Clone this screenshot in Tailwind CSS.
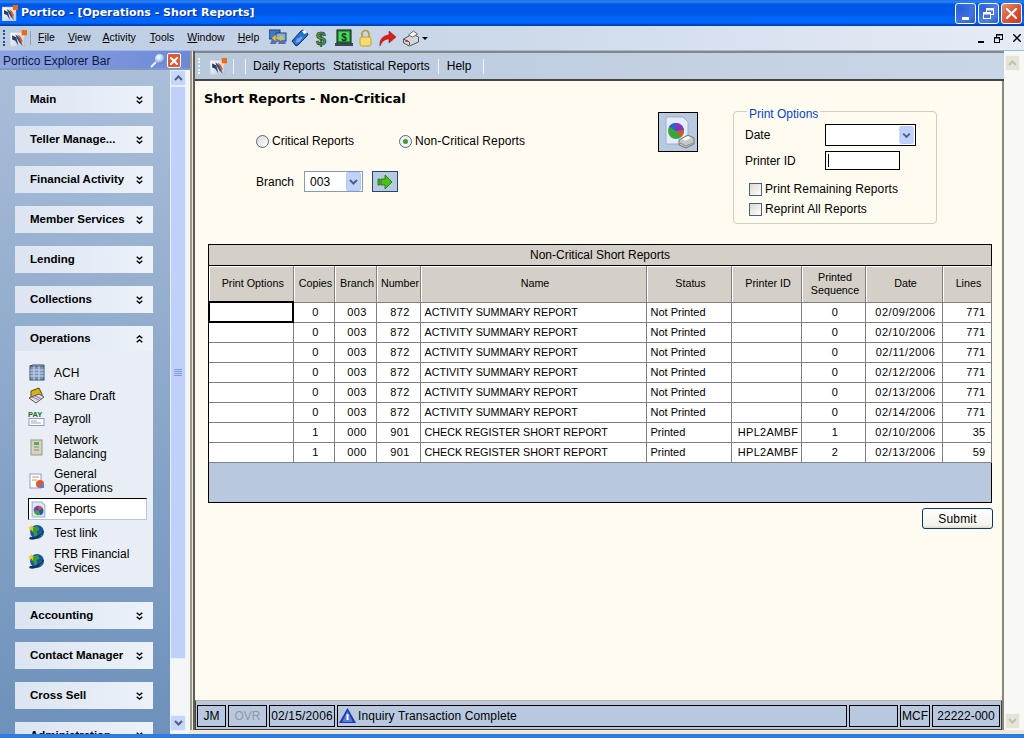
<!DOCTYPE html>
<html><head><meta charset="utf-8"><title>Portico</title>
<script src="https://cdn.jsdelivr.net/npm/@tailwindcss/browser@4"></script></head>
<body class="w-[1024px] h-[738px] overflow-hidden font-['Liberation_Sans',sans-serif] text-[12px] text-black bg-[#ece9d8]">
<svg class="absolute w-0 h-0" width="0" height="0">
<defs><radialGradient id="ball" cx=".35" cy=".3" r=".8"><stop offset="0" stop-color="#fff"/><stop offset=".5" stop-color="#b8cdf4"/><stop offset="1" stop-color="#3f62b4"/></radialGradient>
<linearGradient id="tile" x1="0" y1="0" x2="1" y2="1"><stop offset="0" stop-color="#fff"/><stop offset="1" stop-color="#bcc8dc"/></linearGradient></defs>
<symbol id="logo" viewBox="0 0 16 16"><rect x="0" y="2" width="14" height="14" fill="url(#tile)" stroke="#a9b4c6" stroke-width=".5"/><rect x="11" y="0" width="5" height="5" fill="#f06a10"/><path d="M2 5l4 2 2 8-3-5-3-1z" fill="#26406e"/><path d="M5 4l4 3 3 8-3-3-3-5z" fill="#31507f"/><path d="M7 4l2 4 2 5 1-3-2-4z" fill="#e8641a"/></symbol>
<symbol id="dbl" viewBox="0 0 7 8"><path d="M.7.7L3.500 3 6.300.7M.7 4.700L3.500 7 6.300 4.700" fill="none" stroke="#000" stroke-width="1.400"/></symbol>
<symbol id="dblup" viewBox="0 0 7 8"><path d="M.7 3.300L3.500 1 6.300 3.300M.7 7.300L3.500 5 6.300 7.300" fill="none" stroke="#000" stroke-width="1.400"/></symbol>
<symbol id="globe" viewBox="0 0 16 16"><circle cx="8.500" cy="7.500" r="6.500" fill="#1a50b0"/><path d="M5 3l4-1 2 3-3 2 1 3-3 2-1-4-2-1zM11 8l3-1-1 4-2 1z" fill="#35a030"/><path d="M1 14c4 2 9 0 14-7l-1-1c-3 5-8 7-12 6z" fill="#10306e"/><path d="M3 1l1 2h2l-1.500 1.500L5 7 3 5.500 1 7l.5-2.500L0 3h2z" fill="#f0c820"/></symbol>
<symbol id="pie" viewBox="0 0 16 16"><path d="M2 1h9l3 3v11H2z" fill="#dfe8f6" stroke="#9ab0d0"/><circle cx="8" cy="9" r="4.500" fill="#3aa63a"/><path d="M8 9V4.500a4.500 4.500 0 0 1 4 2.500z" fill="#e05030"/><path d="M8 9l4-2a4.500 4.500 0 0 1-2 6.500z" fill="#304fc0"/><path d="M8 9L3.500 9A4.500 4.500 0 0 1 8 4.500z" fill="#8a30c8"/></symbol>
<symbol id="combo" viewBox="0 0 15 19"><rect x=".5" y=".5" width="14" height="18" rx="1.500" fill="#c1d2fa" stroke="#b6c9f5"/><path d="M4 8l3.500 3.500L11 8" fill="none" stroke="#4d6185" stroke-width="2"/></symbol>
</svg>

<!-- title bar -->
<header class="h-[26px] flex items-center pl-[2px] pr-[2px] bg-[linear-gradient(#1f6fe8_0,#2b84f5_2px,#0058e8_4px,#0058e8_15px,#0066fb_17px,#0066fb_23px,#0040b0_25px)]">
<svg class="w-[16px] h-[16px]"><use href="#logo"/></svg>
<h1 class="ml-[3px] text-white font-bold text-[11px] font-['DejaVu_Sans',sans-serif] [text-shadow:1px_1px_0_#0a2f90]">Portico - [Operations - Short Reports]</h1>
<div class="ml-auto flex gap-[2px]">
<div class="w-[21px] h-[21px] rounded-[3px] border border-white bg-[radial-gradient(circle_at_25%_25%,#2a5fd8,#3f74e4_60%,#2b55c8)] flex items-end pl-[6px] pb-[3px]"><i class="block w-[7px] h-[3px] bg-white"></i></div>
<div class="w-[21px] h-[21px] rounded-[3px] border border-white bg-[radial-gradient(circle_at_25%_25%,#2a5fd8,#4f7fe4_60%,#2b55c8)] flex items-center justify-center"><svg width="11" height="11" fill="none" stroke="#fff"><rect x="3.500" y=".5" width="7" height="6" stroke-width="1"/><path d="M3.500 1.500h7" stroke-width="2"/><rect x=".5" y="4.500" width="7" height="6" fill="#4470dc"/><path d="M.5 5.500h7" stroke-width="2"/></svg></div>
<div class="w-[21px] h-[21px] rounded-[3px] border border-white bg-[linear-gradient(135deg,#e89070,#d8583a_50%,#c83818)] flex items-center justify-center"><svg width="11" height="11" stroke="#fff" stroke-width="2"><path d="M0 0l11 11M11 0L0 11"/></svg></div>
</div>
</header>

<!-- menu bar -->
<nav class="h-[25px] flex items-center bg-[linear-gradient(90deg,#bccce2,#c8d6e8_40%,#e6ecf6)] pl-[3px] pr-[3px] border-b border-[#9db8ec]">
<div class="w-[2px] h-[16px] border-l-2 border-dotted border-[#1f4f8f]"></div>
<svg class="w-[17px] h-[17px] ml-[5px]"><use href="#logo"/></svg>
<i class="block w-px h-[14px] bg-[#f4f8ff] ml-[3px] border-l border-[#8da5c6]"></i>
<ul class="flex w-[228px] shrink-0 ml-[7px] text-[10.500px]">
<li><u>F</u>ile</li><li class="ml-[13px]"><u>V</u>iew</li><li class="ml-[12px]"><u>A</u>ctivity</li><li class="ml-[14px]"><u>T</u>ools</li><li class="ml-[13px]"><u>W</u>indow</li><li class="ml-[13px]"><u>H</u>elp</li>
</ul>
<div class="flex items-center ml-[3px]">
<svg width="18" height="18" viewBox="0 0 18 18"><rect x="0" y="1" width="11" height="9" fill="#3f78c8" stroke="#1e3f78"/><rect x="7" y="4" width="10" height="8" fill="#7ab0e6" stroke="#1e3f78"/><path d="M3 10h6l-2 5H1zM10 12h6l1 3H9z" fill="#5a6fb0"/><path d="M4 9h10M7 6.500L4 9l3 2.500M11 6.500L14 9l-3 2.500" fill="none" stroke="#e8c020" stroke-width="1.600"/></svg>
<svg class="ml-[4px]" width="18" height="18" viewBox="0 0 18 18"><path d="M1 12L10 2l2-1 5 4-1 2-9 9-2 1z" fill="#1c74d0" stroke="#0f2f66"/><path d="M4 13l6-6 2 2-6 5z" fill="#4db0ea"/><circle cx="7.500" cy="11" r="2" fill="#b38ae8"/><path d="M11 2l3-1 2 3-3 1z" fill="#fff"/></svg>
<svg class="ml-[4px]" width="16" height="18" viewBox="0 0 16 18"><text x="8" y="15.500" text-anchor="middle" font-size="18" font-weight="700" fill="#46a24a" stroke="#25402a" stroke-width=".7" font-family="Liberation Sans">$</text></svg>
<svg class="ml-[6px]" width="18" height="18" viewBox="0 0 18 18"><rect x="2" y="1" width="14" height="13" fill="#21a33c" stroke="#111"/><rect x="4" y="3" width="10" height="9" fill="#52d060"/><text x="9" y="12" text-anchor="middle" font-size="10" font-weight="700" fill="#0b3a14" font-family="Liberation Sans">$</text><rect x="0" y="14" width="18" height="3" fill="#3f4650"/></svg>
<svg class="ml-[5px]" width="15" height="18" viewBox="0 0 15 18"><path d="M4 8V5a3.500 3.500 0 0 1 7 0v3" fill="none" stroke="#b89a38" stroke-width="1.700"/><rect x="2" y="8" width="11" height="9" rx="2" fill="#f4dc70" stroke="#c4a030"/></svg>
<svg class="ml-[6px]" width="18" height="18" viewBox="0 0 18 18"><path d="M1 17C0 10 5 6 10 6V2l7 6-7 6v-4c-4 0-7 2-9 7z" fill="#dd1c18" stroke="#8c1010" stroke-width=".5"/></svg>
<div class="flex items-center gap-[2px] ml-[5px]"><svg width="18" height="18" viewBox="0 0 17 18"><path d="M1 10l9-5 6 3v5l-9 4-6-3z" fill="#d4d6da" stroke="#555"/><path d="M6 6l5-4 4 3-5 3z" fill="#fff" stroke="#666"/><path d="M1 10l6 3v3" fill="none" stroke="#555"/><rect x="3" y="11" width="2" height="2" fill="#d02020"/></svg><i class="block border-x-[3px] border-t-[3px] border-x-transparent border-t-black"></i></div>
</div>
<div class="ml-auto flex items-center gap-[10px] text-black">
<i class="block w-[6px] h-[2px] bg-black mt-[8px]"></i>
<svg width="9" height="9" fill="none" stroke="#000"><rect x="2.500" y=".5" width="6" height="5"/><rect x=".5" y="3.500" width="5" height="5" fill="#e2e8f3"/><path d="M1 4h4M3 1h5"/></svg>
<svg width="8" height="8" stroke="#000" stroke-width="1.500"><path d="M0 0l8 8M8 0L0 8"/></svg>
</div>
</nav>

<div class="flex h-[683px]">
<!-- explorer -->
<aside class="w-[190px] shrink-0 flex flex-col overflow-hidden">
<div class="h-[19px] flex items-center pl-[3px] pr-[9px] bg-[linear-gradient(90deg,#8ca4e0,#6e88d8)] text-[12px] text-[#0b1a40] shadow-[inset_0_-2px_0_#7f9ac0]">
<span>Portico Explorer Bar</span>
<svg class="ml-auto" width="16" height="15" viewBox="0 0 16 15"><path d="M6 9l-5 5" stroke="#e8f0ff" stroke-width="2"/><circle cx="10" cy="6" r="5" fill="url(#ball)"/></svg>
<div class="w-[14px] h-[15px] ml-[1px] rounded-[2px] bg-[#df5a34] border border-white flex items-center justify-center"><svg width="8" height="8" stroke="#fff" stroke-width="2"><path d="M0 0l8 8M8 0L0 8"/></svg></div>
</div>
<div class="flex-1 flex min-h-0">
<div class="w-[170px] shrink-0 pl-[15px] pr-[17px] pt-[16px] bg-[linear-gradient(#aabed9,#6d91bb)] flex flex-col gap-[13px] overflow-hidden">
<div class="h-[27px] shrink-0 flex items-center justify-between pl-[15px] pr-[10px] font-bold text-[11.500px] bg-[linear-gradient(90deg,#dbe4f0,#edf2f9)]">Main<svg width="7" height="8"><use href="#dbl"/></svg></div>
<div class="h-[27px] shrink-0 flex items-center justify-between pl-[15px] pr-[10px] font-bold text-[11.500px] bg-[linear-gradient(90deg,#dbe4f0,#edf2f9)]">Teller Manage...<svg width="7" height="8"><use href="#dbl"/></svg></div>
<div class="h-[27px] shrink-0 flex items-center justify-between pl-[15px] pr-[10px] font-bold text-[11.500px] bg-[linear-gradient(90deg,#dbe4f0,#edf2f9)]">Financial Activity<svg width="7" height="8"><use href="#dbl"/></svg></div>
<div class="h-[27px] shrink-0 flex items-center justify-between pl-[15px] pr-[10px] font-bold text-[11.500px] bg-[linear-gradient(90deg,#dbe4f0,#edf2f9)]">Member Services<svg width="7" height="8"><use href="#dbl"/></svg></div>
<div class="h-[27px] shrink-0 flex items-center justify-between pl-[15px] pr-[10px] font-bold text-[11.500px] bg-[linear-gradient(90deg,#dbe4f0,#edf2f9)]">Lending<svg width="7" height="8"><use href="#dbl"/></svg></div>
<div class="h-[27px] shrink-0 flex items-center justify-between pl-[15px] pr-[10px] font-bold text-[11.500px] bg-[linear-gradient(90deg,#dbe4f0,#edf2f9)]">Collections<svg width="7" height="8"><use href="#dbl"/></svg></div>
<div class="shrink-0 mb-[2px]">
<div class="h-[25px] flex items-center justify-between pl-[15px] pr-[10px] font-bold text-[11.500px] bg-[linear-gradient(90deg,#dbe4f0,#edf2f9)]">Operations<svg width="7" height="8"><use href="#dblup"/></svg></div>
<ul class="h-[236px] bg-[#e8eef4] pt-[10px] pl-[13px] pr-[6px] text-[12px] leading-[14px]">
<li class="h-[23px] flex items-center gap-[9px]"><svg width="17" height="17" viewBox="0 0 17 17"><rect x="2" y="2" width="14" height="14" fill="#7a95bc" stroke="#3a4a66"/><path d="M2 2l3-1h11v1" fill="#a8b8cc" stroke="#3a4a66"/><path d="M2 6h14M2 9h14M2 12h14M6 2v14M11 2v14" stroke="#c9d8ec"/></svg><span>ACH</span></li>
<li class="h-[23px] flex items-center gap-[9px]"><svg width="17" height="17" viewBox="0 0 17 17"><path d="M3 10V4l8-3 3 6v2l-7 3z" fill="#d8b018" stroke="#5c4a14"/><path d="M1 11l10-4 5 3-8 6z" fill="#e4e2ee" stroke="#5c5440"/><path d="M4 11l6-2M6 12l6-2M8 13l5-2" stroke="#9a90c8"/></svg><span>Share Draft</span></li>
<li class="h-[23px] flex items-center gap-[9px]"><svg width="17" height="17" viewBox="0 0 17 17"><text x="0" y="7" font-size="7.500" font-weight="700" fill="#1a6a2a" font-family="Liberation Sans">PAY</text><rect x="1" y="8.500" width="15" height="7" fill="#fff" stroke="#9a8ee8"/><path d="M3 11h6M3 13h10" stroke="#9ab"/></svg><span>Payroll</span></li>
<li class="h-[34px] flex items-center gap-[9px]"><svg width="17" height="17" viewBox="0 0 17 17"><rect x="3" y="1" width="11" height="15" fill="#d6d2c2" stroke="#9a9888"/><rect x="6" y="3" width="5" height="3" fill="#4fb04f"/><path d="M6 8h5M6 11h5" stroke="#8a8a80"/></svg><span>Network<br>Balancing</span></li>
<li class="h-[34px] flex items-center gap-[9px]"><svg width="17" height="17" viewBox="0 0 17 17"><rect x="2" y="1" width="11" height="14" fill="#fff" stroke="#8aa0c8"/><path d="M4 4h7M4 7h5" stroke="#c0a060"/><circle cx="12" cy="11" r="4" fill="#e05a30"/><path d="M12 11h4v4h-4z" fill="#5a80d0"/></svg><span>General<br>Operations</span></li>
<li class="h-[22px] flex items-center gap-[7px] pl-[1px] bg-white border border-[#b5c4e0] border-t-black border-l-black"><svg width="17" height="17"><use href="#pie"/></svg><span>Reports</span></li>
<li class="h-[23px] mt-[1px] flex items-center gap-[9px]"><svg width="17" height="17"><use href="#globe"/></svg><span>Test link</span></li>
<li class="h-[34px] flex items-center gap-[9px]"><svg width="17" height="17"><use href="#globe"/></svg><span>FRB Financial<br>Services</span></li>
</ul></div>
<div class="h-[27px] shrink-0 flex items-center justify-between pl-[15px] pr-[10px] font-bold text-[11.500px] bg-[linear-gradient(90deg,#dbe4f0,#edf2f9)]">Accounting<svg width="7" height="8"><use href="#dbl"/></svg></div>
<div class="h-[27px] shrink-0 flex items-center justify-between pl-[15px] pr-[10px] font-bold text-[11.500px] bg-[linear-gradient(90deg,#dbe4f0,#edf2f9)]">Contact Manager<svg width="7" height="8"><use href="#dbl"/></svg></div>
<div class="h-[27px] shrink-0 flex items-center justify-between pl-[15px] pr-[10px] font-bold text-[11.500px] bg-[linear-gradient(90deg,#dbe4f0,#edf2f9)]">Cross Sell<svg width="7" height="8"><use href="#dbl"/></svg></div>
<div class="h-[27px] shrink-0 flex items-center justify-between pl-[15px] pr-[10px] font-bold text-[11.500px] bg-[linear-gradient(90deg,#dbe4f0,#edf2f9)]">Administration<svg width="7" height="8"><use href="#dbl"/></svg></div>
</div>
<div class="w-[16px] shrink-0 bg-[#f4f5f6] flex flex-col pb-[3px]">
<div class="h-[16px] bg-[#c6d5fa] border border-[#e8eefc] rounded-[2px] flex items-center justify-center"><svg width="9" height="6" fill="none" stroke="#4d6185" stroke-width="2"><path d="M1 5l3.500-3.500L8 5"/></svg></div>
<div class="h-[573px] bg-[#bfd0fb] border border-[#e8eefc] rounded-[2px] flex items-center justify-center"><svg width="8" height="8" stroke="#7f9bdc"><path d="M0 .5h8M0 2.500h8M0 4.500h8M0 6.500h8"/></svg></div>
<div class="h-[16px] mt-auto bg-[#c6d5fa] border border-[#e8eefc] rounded-[2px] flex items-center justify-center"><svg width="9" height="6" fill="none" stroke="#4d6185" stroke-width="2"><path d="M1 1l3.500 3.500L8 1"/></svg></div>
</div>
<div class="w-[4px] shrink-0 bg-[#f4f5f6]"></div>
</div>
</aside>
<!-- splitter -->
<div class="w-[5px] shrink-0 bg-[#ece9d8] border-l-2 border-r-2 border-l-[#9d9a8c] border-r-[#5e5c52] h-[679px]"></div>
<!-- main -->
<main class="w-[809px] shrink-0 h-[679px] flex flex-col border-t-2 border-[#8a8678]">
<div class="h-[28px] shrink-0 flex items-center bg-[linear-gradient(90deg,#b9c9dd,#c9d6e6)] border-b-2 border-[#444] pl-[3px]">
<div class="w-[2px] h-[16px] border-l-2 border-dotted border-[#f4f6f8]"></div>
<svg class="w-[17px] h-[17px] ml-[10px]"><use href="#logo"/></svg>
<i class="block w-px h-[15px] bg-[#eef3f8] ml-[6px]"></i><i class="block w-px h-[15px] bg-[#eef3f8] ml-[11px]"></i>
<span class="ml-[7px]">Daily Reports</span><span class="ml-[8px]">Statistical Reports</span>
<i class="block w-px h-[15px] bg-[#eef3f8] ml-[8px]"></i><span class="ml-[8px]">Help</span><i class="block w-px h-[15px] bg-[#eef3f8] ml-[12px]"></i>
</div>
<div class="flex-1 bg-[#fffbf0] pl-[9px] pr-[11px] border-r-2 border-[#8a8678] flex flex-col">
<h2 class="mt-[10px] h-[16px] leading-[16px] font-bold text-[13px] font-['DejaVu_Sans',sans-serif] tracking-[-0.05px]">Short Reports - Non-Critical</h2>
<div class="flex h-[128px] -mt-[6px]">
<div class="w-[454px] shrink-0 pl-[52px] pt-[32px]">
<div class="flex items-center h-[16px]">
<i class="block w-[13px] h-[13px] rounded-full border border-[#4a6a90] bg-[linear-gradient(135deg,#dcd8cc,#fff)]"></i><span class="ml-[3px]">Critical Reports</span>
<i class="flex w-[13px] h-[13px] ml-[45px] rounded-full border border-[#4a6a90] bg-[#f4f2ea] items-center justify-center"><b class="block w-[5px] h-[5px] rounded-full bg-[#3f9a3f]"></b></i><span class="ml-[3px] tracking-[0.1px]">Non-Critical Reports</span>
</div>
<div class="flex items-center mt-[22px]">
<span>Branch</span>
<div class="ml-[10px] w-[59px] h-[21px] bg-white border border-[#7f9db9] flex items-center pl-[5px] pr-[1px] justify-between"><span>003</span><svg width="15" height="19"><use href="#combo"/></svg></div>
<div class="ml-[9px] w-[26px] h-[21px] bg-[#b8cadf] border border-[#23456e] flex items-center justify-center"><svg width="16" height="14" viewBox="0 0 16 14"><path d="M1 4h2v6H1zM4 4h4V0l7 7-7 7v-4H4z" fill="#4ec01e" stroke="#1e6a10" stroke-width=".8"/></svg></div>
</div>
</div>
<div class="w-[40px] h-[40px] mt-[11px] shrink-0 bg-[#b8cadf] border border-black flex items-center justify-center"><svg width="34" height="34" viewBox="0 0 34 34"><path d="M5 2h17l5 5v22H5z" fill="#e4ecf8" stroke="#9ab0d0"/><circle cx="15" cy="16" r="8" fill="#3aa63a"/><path d="M15 16V8a8 8 0 0 1 8 7z" fill="#8a30c8"/><path d="M15 16h8a8 8 0 0 1-3 6z" fill="#e05030"/><path d="M15 16L8 12a8 8 0 0 1 7-4z" fill="#3060d0"/><path d="M18 25l9-5 6 3v6l-8 4-7-3z" fill="#c6c8c6" stroke="#70757a"/><path d="M21 24l6-3 3 2-6 3z" fill="#f6f6f6"/><path d="M19 28l6 3 7-3" fill="none" stroke="#8a8e90"/></svg></div>
<fieldset class="ml-[35px] mt-[1px] w-[204px] h-[122px] border border-[#d0d0bf] rounded-[4px] pl-[11px] min-w-0">
<legend class="ml-[2px] px-[2px] pt-[6px] text-[#0046d5] leading-[13px]">Print Options</legend>
<div class="flex items-center h-[22px] mt-[3px]"><span class="w-[80px]">Date</span><div class="w-[91px] h-[22px] bg-white border border-black flex items-center justify-end pr-px"><svg width="15" height="18"><use href="#combo"/></svg></div></div>
<div class="flex items-center h-[19px] mt-[5px]"><span class="w-[80px]">Printer ID</span><div class="w-[75px] h-[19px] bg-white border border-black pl-[2px] pt-[2px]"><i class="block w-px h-[13px] bg-black"></i></div></div>
<div class="flex items-center h-[14px] mt-[12px] ml-[4px] tracking-[0.1px]"><i class="block w-[13px] h-[13px] border border-[#46627e] bg-[linear-gradient(135deg,#dcd8cc,#fff)]"></i><span class="ml-[3px]">Print Remaining Reports</span></div>
<div class="flex items-center h-[14px] mt-[6px] ml-[4px] tracking-[0.1px]"><i class="block w-[13px] h-[13px] border border-[#46627e] bg-[linear-gradient(135deg,#dcd8cc,#fff)]"></i><span class="ml-[3px]">Reprint All Reports</span></div>
</fieldset>
</div>
<section class="ml-[4px] mt-[15px] w-[784px] h-[259px] border border-black bg-[#b8c9df] flex flex-col">
<div class="h-[21px] shrink-0 pb-[1px] bg-[#d4d0c8] border-b border-black flex items-center justify-center">Non-Critical Short Reports</div>
<table class="w-[782px] table-fixed border-collapse text-[11px] tracking-[0.3px]">
<colgroup><col class="w-[84px]"><col class="w-[41px]"><col class="w-[42px]"><col class="w-[44px]"><col class="w-[226px]"><col class="w-[85px]"><col class="w-[70px]"><col class="w-[64px]"><col class="w-[77px]"><col class="w-[49px]"></colgroup>
<thead class="bg-[#d4d0c8] tracking-normal [&_th]:border-r [&_th]:border-b [&_th]:border-[#808080] [&_th]:font-normal [&_th]:h-[36px] [&_th]:leading-[13px] [&_th]:text-[10.75px] [&_th]:pl-[4px] [&_th]:shadow-[inset_1px_1px_0_#fff]">
<tr><th>Print Options</th><th>Copies</th><th>Branch</th><th>Number</th><th>Name</th><th>Status</th><th>Printer ID</th><th>Printed<br>Sequence</th><th>Date</th><th>Lines</th></tr>
</thead>
<tbody class="bg-white [&_td]:h-[20px] [&_td]:pl-[4px] [&_td]:border-r [&_td]:border-b [&_td]:border-[#808080] [&_td]:whitespace-nowrap">
<tr><td class="outline-2 -outline-offset-1 outline-black"></td><td class="text-center">0</td><td class="text-center">003</td><td class="text-center">872</td><td class="text-[10.75px] tracking-normal">ACTIVITY SUMMARY REPORT</td><td class="tracking-normal">Not Printed</td><td></td><td class="text-center">0</td><td class="text-center tracking-[0.55px]">02/09/2006</td><td class="text-right pr-[5px]">771</td></tr>
<tr><td></td><td class="text-center">0</td><td class="text-center">003</td><td class="text-center">872</td><td class="text-[10.75px] tracking-normal">ACTIVITY SUMMARY REPORT</td><td class="tracking-normal">Not Printed</td><td></td><td class="text-center">0</td><td class="text-center tracking-[0.55px]">02/10/2006</td><td class="text-right pr-[5px]">771</td></tr>
<tr><td></td><td class="text-center">0</td><td class="text-center">003</td><td class="text-center">872</td><td class="text-[10.75px] tracking-normal">ACTIVITY SUMMARY REPORT</td><td class="tracking-normal">Not Printed</td><td></td><td class="text-center">0</td><td class="text-center tracking-[0.55px]">02/11/2006</td><td class="text-right pr-[5px]">771</td></tr>
<tr><td></td><td class="text-center">0</td><td class="text-center">003</td><td class="text-center">872</td><td class="text-[10.75px] tracking-normal">ACTIVITY SUMMARY REPORT</td><td class="tracking-normal">Not Printed</td><td></td><td class="text-center">0</td><td class="text-center tracking-[0.55px]">02/12/2006</td><td class="text-right pr-[5px]">771</td></tr>
<tr><td></td><td class="text-center">0</td><td class="text-center">003</td><td class="text-center">872</td><td class="text-[10.75px] tracking-normal">ACTIVITY SUMMARY REPORT</td><td class="tracking-normal">Not Printed</td><td></td><td class="text-center">0</td><td class="text-center tracking-[0.55px]">02/13/2006</td><td class="text-right pr-[5px]">771</td></tr>
<tr><td></td><td class="text-center">0</td><td class="text-center">003</td><td class="text-center">872</td><td class="text-[10.75px] tracking-normal">ACTIVITY SUMMARY REPORT</td><td class="tracking-normal">Not Printed</td><td></td><td class="text-center">0</td><td class="text-center tracking-[0.55px]">02/14/2006</td><td class="text-right pr-[5px]">771</td></tr>
<tr><td></td><td class="text-center">1</td><td class="text-center">000</td><td class="text-center">901</td><td class="text-[10.75px] tracking-normal">CHECK REGISTER SHORT REPORT</td><td class="tracking-normal">Printed</td><td class="text-center">HPL2AMBF</td><td class="text-center">1</td><td class="text-center tracking-[0.55px]">02/10/2006</td><td class="text-right pr-[5px]">35</td></tr>
<tr><td></td><td class="text-center">1</td><td class="text-center">000</td><td class="text-center">901</td><td class="text-[10.75px] tracking-normal">CHECK REGISTER SHORT REPORT</td><td class="tracking-normal">Printed</td><td class="text-center">HPL2AMBF</td><td class="text-center">2</td><td class="text-center tracking-[0.55px]">02/13/2006</td><td class="text-right pr-[5px]">59</td></tr>
</tbody></table>
</section>
<div class="flex justify-end mt-[5px] mr-[-2px]"><button class="w-[71px] h-[21px] rounded-[3px] border border-[#003c74] bg-[linear-gradient(#fff,#f4f2ea_85%,#dcd8c8)] tracking-[0.2px]">Submit</button></div>
<footer class="mt-auto h-[30px] -ml-[9px] -mr-[11px] border border-[#444] border-t-[#b8b4a4] bg-[#b8c9df] flex items-center gap-[2px] pl-px pr-px pt-[4px] pb-[2px] text-[12px] [&>div]:h-full [&>div]:border [&>div]:border-black [&>div]:flex [&>div]:items-center">
<div class="w-[29px] justify-center">JM</div>
<div class="w-[39px] justify-center text-[#8f98a4]">OVR</div>
<div class="w-[66px] justify-center tracking-[0.15px]">02/15/2006</div>
<div class="w-[510px] pl-[1px]"><svg width="17" height="16" viewBox="0 0 17 16"><path d="M8.500 0L17 15H0z" fill="#1e3aa8"/><path d="M8.500 3L14 14H3z" fill="#5a78e0"/><rect x="7.500" y="6" width="2" height="6" fill="#fff"/></svg><span class="ml-[2px] tracking-[0.1px]">Inquiry Transaction Complete</span></div>
<div class="w-[49px]"></div>
<div class="w-[30px] justify-center">MCF</div>
<div class="w-[68px] justify-center">22222-000</div>
</footer>
</div>
</main>
<!-- right scrollbar -->
<div class="w-[20px] shrink-0 h-[679px] bg-[#f8f8f4] pt-[4px] pl-[1px] flex flex-col">
<div class="w-[15px] h-[16px] bg-[#e6e4d8] border border-[#f4f4ee] rounded-[2px] flex items-center justify-center"><svg width="9" height="6" fill="none" stroke="#c0bfb0" stroke-width="2"><path d="M1 5l3.500-3.500L8 5"/></svg></div>
<div class="w-[15px] h-[16px] mt-auto mb-[1px] bg-[#e6e4d8] border border-[#f4f4ee] rounded-[2px] flex items-center justify-center"><svg width="9" height="6" fill="none" stroke="#c0bfb0" stroke-width="2"><path d="M1 1l3.500 3.500L8 1"/></svg></div>
</div>
</div>
<div class="h-[4px] bg-[#2f7be0]"></div>
</body></html>
